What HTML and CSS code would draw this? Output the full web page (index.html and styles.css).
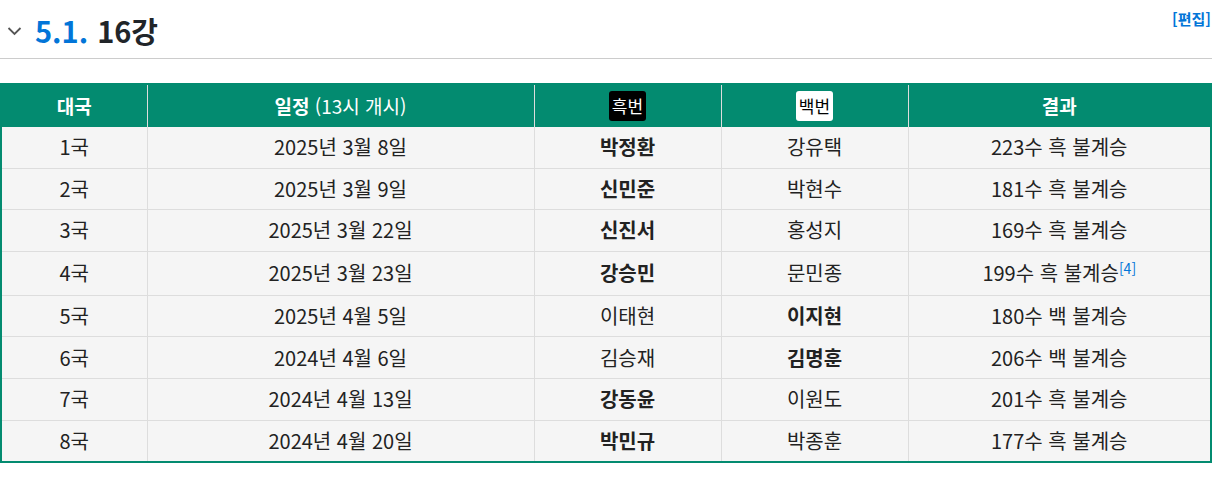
FILE: index.html
```html
<!DOCTYPE html>
<html lang="ko">
<head>
<meta charset="utf-8">
<link rel="stylesheet" href="styles.css">
</head>
<body>
<div class="heading">
  <div class="title">
    <svg class="chev" width="15" height="10" viewBox="0 0 15 10"><path d="M1.5 2 L7.5 8 L13.5 2" fill="none" stroke="#555" stroke-width="1.8"/></svg>
    <span class="num">5.1.</span><span class="txt">16강</span>
  </div>
  <a class="edit">[편집]</a>
</div>
<div class="wrap">
<table class="tbl">
  <colgroup>
    <col style="width:146px"><col style="width:387px"><col style="width:187px"><col style="width:187px"><col>
  </colgroup>
  <thead>
    <tr><th>대국</th><th>일정 <span class="light">(13시 개시)</span></th><th><span class="badge black">흑번</span></th><th><span class="badge white">백번</span></th><th>결과</th></tr>
  </thead>
  <tbody>
    <tr><td>1국</td><td>2025년 3월 8일</td><td><b>박정환</b></td><td>강유택</td><td>223수 흑 불계승</td></tr>
    <tr><td>2국</td><td>2025년 3월 9일</td><td><b>신민준</b></td><td>박현수</td><td>181수 흑 불계승</td></tr>
    <tr><td>3국</td><td>2025년 3월 22일</td><td><b>신진서</b></td><td>홍성지</td><td>169수 흑 불계승</td></tr>
    <tr class="tall"><td>4국</td><td>2025년 3월 23일</td><td><b>강승민</b></td><td>문민종</td><td>199수 흑 불계승<sup>[4]</sup></td></tr>
    <tr><td>5국</td><td>2025년 4월 5일</td><td>이태현</td><td><b>이지현</b></td><td>180수 백 불계승</td></tr>
    <tr><td>6국</td><td>2024년 4월 6일</td><td>김승재</td><td><b>김명훈</b></td><td>206수 백 불계승</td></tr>
    <tr><td>7국</td><td>2024년 4월 13일</td><td><b>강동윤</b></td><td>이원도</td><td>201수 흑 불계승</td></tr>
    <tr><td>8국</td><td>2024년 4월 20일</td><td><b>박민규</b></td><td>박종훈</td><td>177수 흑 불계승</td></tr>
  </tbody>
</table>
</div>
</body>
</html>
```
FILE: styles.css
```css
html, body { margin: 0; padding: 0; background: #fff; }
body {
  font-family: "Noto Sans CJK KR", "Noto Sans", sans-serif;
  color: #222;
  width: 1212px;
}
.heading {
  display: flex;
  justify-content: space-between;
  align-items: flex-start;
  height: 59px;
  border-bottom: 1px solid #ccc;
  box-sizing: border-box;
}
.title {
  display: flex;
  align-items: center;
  padding-top: 8px;
  font-size: 29px;
  font-weight: bold;
  line-height: 44px;
}
.chev { margin: 2px 13px 0 7px; }
.num { color: #0275d8; margin-right: 9px; }
.txt { color: #212529; }
.edit {
  color: #0275d8;
  font-size: 15px;
  font-weight: bold;
  padding-top: 8px;
  margin-right: 1px;
}
.wrap { padding-top: 24px; }
.tbl {
  width: 1212px;
  border-collapse: collapse;
  table-layout: fixed;
  border: 2px solid #038b70;
  font-size: 20px;
}
.tbl th {
  background: #038b70;
  color: #fff;
  font-weight: bold;
  font-size: 19px;
  height: 42px;
  padding: 0 10px;
  border-left: 1px solid #ddd;
  text-align: center;
  line-height: 24px;
}
.tbl th:first-child { border-left: none; }
.light { font-weight: normal; }
.badge {
  display: inline-block;
  border-radius: 3px;
  padding: 3px 3px;
  line-height: 24px;
  font-size: 17px;
  font-weight: normal;
}
.badge.black { background: #000; color: #fff; }
.badge.white { background: #fff; color: #000; }
.tbl td {
  background: #f5f5f5;
  height: 40.6px;
  padding: 0 10px;
  border: 1px solid #ddd;
  text-align: center;
  line-height: 24px;
  color: #222;
}
.tbl tr.tall td { height: 43px; }
.tbl tbody tr:first-child td { border-top: none; }
.tbl b { font-weight: bold; color: #222; }
sup {
  color: #0275d8;
  font-size: 14px;
  line-height: 0;
  vertical-align: 7px;
}
```
